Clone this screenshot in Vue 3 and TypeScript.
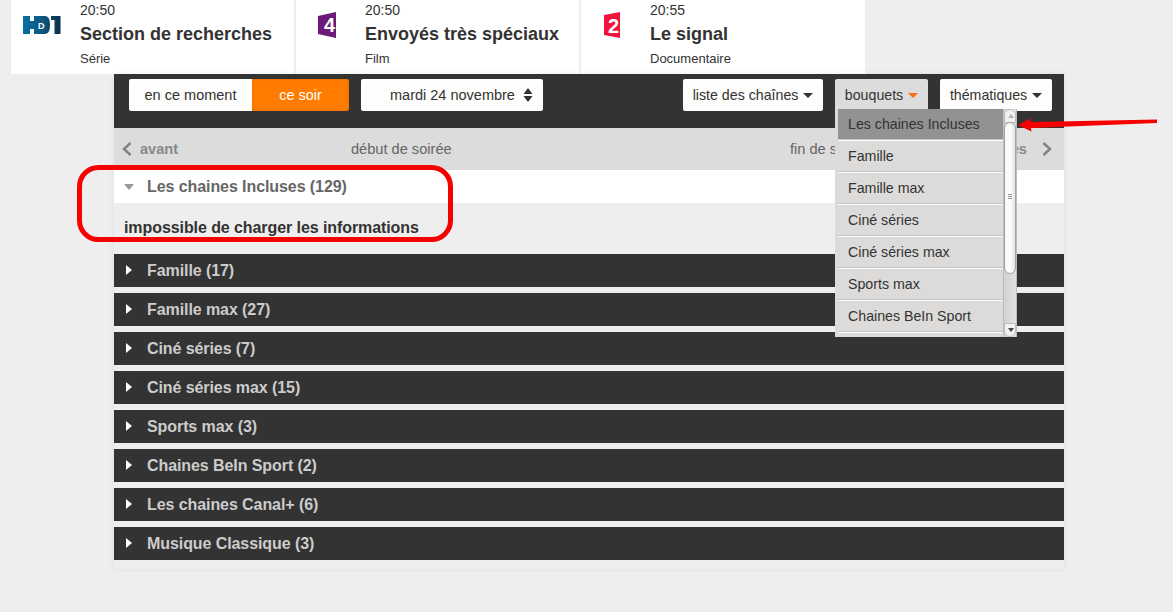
<script setup lang="ts">
const programmes = [
  { key: 'hd1', time: '20:50', title: 'Section de recherches', kind: 'Série' },
  { key: 'f4', time: '20:50', title: 'Envoyés très spéciaux', kind: 'Film' },
  { key: 'f2', time: '20:55', title: 'Le signal', kind: 'Documentaire' },
];

const bouquets = [
  { name: 'Famille', count: 17 },
  { name: 'Famille max', count: 27 },
  { name: 'Ciné séries', count: 7 },
  { name: 'Ciné séries max', count: 15 },
  { name: 'Sports max', count: 3 },
  { name: 'Chaines BeIn Sport', count: 2 },
  { name: 'Les chaines Canal+', count: 6 },
  { name: 'Musique Classique', count: 3 },
];

const menuItems = [
  'Les chaines Incluses',
  'Famille',
  'Famille max',
  'Ciné séries',
  'Ciné séries max',
  'Sports max',
  'Chaines BeIn Sport',
];
</script>

<template>
  <div class="page">
    <section class="now">
      <article v-for="p in programmes" :key="p.key" class="now__card">
        <div class="now__logo">
          <svg v-if="p.key === 'hd1'" class="now__logo-hd" width="38" height="18" viewBox="0 0 38 18" aria-hidden="true">
            <defs>
              <linearGradient id="hd1-grad" x1="0" y1="0" x2="1" y2="0">
                <stop offset="0" stop-color="#0a6fa3" />
                <stop offset="0.55" stop-color="#0d5580" />
                <stop offset="1" stop-color="#0c2f4a" />
              </linearGradient>
            </defs>
            <path
              fill="url(#hd1-grad)"
              d="M0 0h7v5h4V0h11c3.500 0 5 3.500 5 9s-1.500 9-5 9H11v-5H7v5H0zM28 0h9.500v18H31.500V4H28z"
            />
            <text x="15" y="13" class="now__logo-d">D</text>
          </svg>
          <svg v-else-if="p.key === 'f4'" width="19" height="26" viewBox="0 0 19 26" aria-hidden="true">
            <path fill="#6b1a7a" d="M0 4 18 0v26L0 22z" />
            <text x="6" y="20" class="now__logo-num">4</text>
          </svg>
          <svg v-else width="16" height="26" viewBox="0 0 16 26" aria-hidden="true">
            <path fill="#f0143c" d="M0 3 16 0v26L0 23z" />
            <text x="4" y="21" class="now__logo-num">2</text>
          </svg>
        </div>
        <div class="now__text">
          <div class="now__time">{{ p.time }}</div>
          <div class="now__title">{{ p.title }}</div>
          <div class="now__kind">{{ p.kind }}</div>
        </div>
      </article>
    </section>

    <main class="guide">
      <div class="toolbar">
        <div class="switch">
          <button type="button" class="switch__btn">en ce moment</button>
          <button type="button" class="switch__btn switch__btn--on">ce soir</button>
        </div>
        <button type="button" class="tool date">
          mardi 24 novembre
          <svg class="date__arrows" width="10" height="16" viewBox="0 0 10 16" aria-hidden="true">
            <path fill="#333" d="M5 1 9.500 7H.5zM5 15 .5 9h9z" />
          </svg>
        </button>
        <button type="button" class="tool tool--push tool--list">liste des chaînes <i class="caret"></i></button>
        <div class="menu-wrap">
          <button type="button" class="tool tool--open">bouquets <i class="caret caret--on"></i></button>
          <div class="menu">
            <ul class="menu__list">
              <li
                v-for="(item, i) in menuItems"
                :key="item"
                class="menu__item"
                :class="{ 'menu__item--active': i === 0 }"
              >{{ item }}</li>
            </ul>
            <div class="scroll">
              <span class="scroll__btn scroll__btn--up"></span>
              <span class="scroll__thumb"><b class="scroll__grip"></b></span>
              <span class="scroll__btn scroll__btn--down"></span>
            </div>
          </div>
        </div>
        <button type="button" class="tool tool--themes">thématiques <i class="caret"></i></button>
      </div>

      <div class="timeline">
        <span class="timeline__step">
          <svg width="12" height="16" viewBox="0 0 12 16" aria-hidden="true">
            <path fill="none" stroke="#808080" stroke-width="2.400" d="M9.500 2 3 8l6.500 6" />
          </svg>
          avant
        </span>
        <span class="timeline__label">début de soirée</span>
        <span class="timeline__label">fin de soirée</span>
        <span class="timeline__step timeline__step--end">
          après
          <svg width="12" height="16" viewBox="0 0 12 16" aria-hidden="true">
            <path fill="none" stroke="#808080" stroke-width="2.400" d="M2.500 2 9 8l-6.500 6" />
          </svg>
        </span>
      </div>

      <div class="group group--open">
        <i class="group__down"></i>
        Les chaines Incluses (129)
      </div>
      <div class="group__body">impossible de charger les informations</div>

      <div v-for="b in bouquets" :key="b.name" class="group">
        <i class="group__right"></i>
        {{ b.name }} ({{ b.count }})
      </div>
    </main>

    <svg class="marks" width="1173" height="612" viewBox="0 0 1173 612" aria-hidden="true">
      <rect x="79.500" y="167.500" width="371" height="72" rx="19" fill="none" stroke="#f60000" stroke-width="5" />
      <path fill="#f60000" d="M1157 119.500v3.500L1031 128l.5 3.500-13.500-6.500 12.500-6.500.5 3.500z" />
    </svg>
  </div>
</template>

<style>
html,
body {
  margin: 0;
  background: #eee;
}
</style>

<style scoped>
.page {
  position: relative;
  width: 1173px;
  height: 612px;
  overflow: hidden;
  background: #eee;
  font-family: "Liberation Sans", Arial, sans-serif;
  color: #333;
}

.now {
  display: grid;
  grid-template-columns: 285px 285px 284px;
  width: 854px;
  height: 74px;
  margin-left: 11px;
  background: #fff;
}

.now__card {
  display: flex;
  border-right: 2px solid #eee;
}

.now__card:last-child {
  border-right: none;
}

.now__logo {
  display: flex;
  justify-content: center;
  align-items: flex-start;
  width: 69px;
  padding: 12px 7px 0 0;
  box-sizing: border-box;
}

.now__logo-hd {
  margin-top: 4px;
}

.now__logo-d {
  font: bold 9px "Liberation Sans", sans-serif;
  fill: #fff;
}

.now__logo-num {
  font: bold 20px "Liberation Sans", sans-serif;
  fill: #fff;
}

.now__time {
  font-size: 14px;
  line-height: 16px;
  margin-top: 2px;
}

.now__title {
  font-size: 18px;
  font-weight: 700;
  line-height: 22px;
  margin-top: 5px;
}

.now__kind {
  font-size: 13px;
  line-height: 16px;
  margin-top: 6px;
}

.guide {
  width: 950px;
  height: 495px;
  margin-left: 114px;
  background: #eee;
  box-shadow: 0 0 6px rgba(0, 0, 0, 0.07);
}

.toolbar {
  display: flex;
  align-items: flex-start;
  gap: 12px;
  height: 54px;
  padding: 5px 12px 0 15px;
  box-sizing: border-box;
  background: #333;
}

.switch {
  display: flex;
}

.switch__btn,
.tool {
  height: 32px;
  border: none;
  font: 14.200px "Liberation Sans", Arial, sans-serif;
  color: #333;
  background: #fdfdfb;
  cursor: pointer;
}

.switch__btn {
  width: 123px;
  font-size: 14.500px;
  border-radius: 2px 0 0 2px;
}

.switch__btn--on {
  width: 97px;
  border-radius: 0 2px 2px 0;
  background: #ff7c00;
  color: #fff;
  box-shadow: inset 0 0 2px rgba(160, 70, 0, 0.6);
}

.tool {
  padding: 0;
  border-radius: 2px;
  white-space: nowrap;
}

.tool--push {
  margin-left: auto;
}

.tool--list {
  width: 140px;
}

.tool--themes {
  width: 112px;
}

.tool--open {
  width: 93px;
  background: #dcdcdc;
}

.date {
  display: flex;
  align-items: center;
  width: 182px;
  padding: 0 0 0 29px;
  font-size: 14.500px;
}

.date__arrows {
  margin-left: 8px;
}

.caret {
  display: inline-block;
  width: 0;
  height: 0;
  margin-left: 1px;
  vertical-align: 2px;
  border-left: 5px solid transparent;
  border-right: 5px solid transparent;
  border-top: 5px solid #333;
}

.caret--on {
  border-top-color: #ff6a13;
}

.menu-wrap {
  position: relative;
}

.menu {
  position: absolute;
  top: 30px;
  left: 0;
  z-index: 5;
  display: flex;
  width: 182px;
  height: 228px;
  overflow: hidden;
  background: #dcdbd9;
}

.menu__list {
  width: 165px;
  margin: 0 0 0 3px;
  padding: 0;
  list-style: none;
}

.menu__list::after {
  content: "";
  display: block;
  height: 1px;
  background: #fff;
}

.menu__item {
  height: 30px;
  padding-left: 10px;
  font-size: 14.200px;
  line-height: 31px;
  color: #333;
  background: #dcdbd9;
  border-bottom: 1px solid #c4c3c1;
  border-top: 1px solid #fff;
}

.menu__item--active {
  height: 30px;
  border-top: none;
  background: #929292;
}

.scroll {
  position: relative;
  width: 14px;
  background: linear-gradient(90deg, #d2d1cf, #e2e1df);
  border: 1px solid #bcbcba;
  border-top: none;
  border-bottom: none;
  box-sizing: border-box;
}

.scroll__btn {
  position: absolute;
  left: 0;
  right: 0;
  height: 14px;
  background: #f1f1ef;
  border: 1px solid #bcbcba;
  box-sizing: border-box;
}

.scroll__btn--up {
  top: 0;
  border-radius: 6px 6px 0 0;
}

.scroll__btn--down {
  bottom: 0;
  border-radius: 0 0 6px 6px;
}

.scroll__btn::after {
  content: "";
  position: absolute;
  left: 2.500px;
  border-left: 3px solid transparent;
  border-right: 3px solid transparent;
}

.scroll__btn--up::after {
  top: 4px;
  border-bottom: 4px solid #b0b0b0;
}

.scroll__btn--down::after {
  top: 4px;
  border-top: 4px solid #444;
}

.scroll__thumb {
  position: absolute;
  top: 13px;
  left: 0;
  right: 0;
  height: 152px;
  background: linear-gradient(90deg, #f6f6f4, #fff 50%, #e2e2e0);
  border: 1px solid #a2a2a2;
  border-radius: 6px;
  box-sizing: border-box;
}

.scroll__grip {
  position: absolute;
  top: 71px;
  left: 3px;
  width: 4px;
  height: 6px;
  background: repeating-linear-gradient(#999 0 1px, transparent 1px 2px);
}

.timeline {
  display: grid;
  grid-template-columns: 230px 439px 1fr auto;
  align-items: center;
  height: 42px;
  padding: 0 6px 0 7px;
  font-size: 14.600px;
  background: #dcdcdc;
  color: #666;
}

.timeline__step {
  display: flex;
  align-items: center;
  gap: 7px;
  font-weight: 700;
  color: #888;
}

.timeline__step--end {
  gap: 14px;
  margin-right: 5px;
}

.group {
  display: flex;
  align-items: center;
  height: 33px;
  margin-bottom: 6px;
  padding-left: 33px;
  position: relative;
  font-size: 16px;
  font-weight: 700;
  letter-spacing: -0.08px;
  color: #ccc;
  background: #333;
}

.group--open {
  margin-bottom: 0;
  color: #666;
  background: #fff;
}

.group__body {
  height: 51px;
  padding-left: 10px;
  box-sizing: border-box;
  font-size: 16px;
  font-weight: 700;
  letter-spacing: -0.08px;
  line-height: 50px;
  color: #333;
  background: #eee;
}

.group__right {
  position: absolute;
  left: 12px;
  top: 11px;
  border-top: 5px solid transparent;
  border-bottom: 5px solid transparent;
  border-left: 6px solid #fff;
}

.group__down {
  position: absolute;
  left: 10px;
  top: 14px;
  border-left: 5px solid transparent;
  border-right: 5px solid transparent;
  border-top: 6px solid #999;
}

.marks {
  position: absolute;
  inset: 0;
  z-index: 10;
  pointer-events: none;
}
</style>
